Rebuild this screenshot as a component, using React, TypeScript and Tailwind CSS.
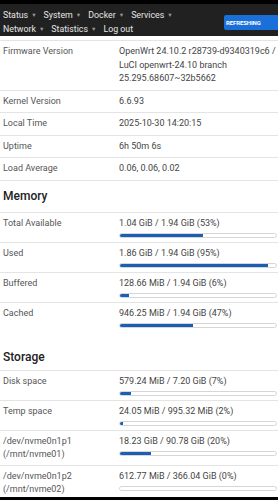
import React from "react";

type InfoRow = { label: string; value: string[] };
type BarRow = { label: string[]; text: string; pct: number };

const system: InfoRow[] = [
  {
    label: "Firmware Version",
    value: ["OpenWrt 24.10.2 r28739-d9340319c6 /", "LuCI openwrt-24.10 branch", "25.295.68607~32b5662"],
  },
  { label: "Kernel Version", value: ["6.6.93"] },
  { label: "Local Time", value: ["2025-10-30 14:20:15"] },
  { label: "Uptime", value: ["6h 50m 6s"] },
  { label: "Load Average", value: ["0.06, 0.06, 0.02"] },
];

const memory: BarRow[] = [
  { label: ["Total Available"], text: "1.04 GiB / 1.94 GiB (53%)", pct: 53 },
  { label: ["Used"], text: "1.86 GiB / 1.94 GiB (95%)", pct: 95 },
  { label: ["Buffered"], text: "128.66 MiB / 1.94 GiB (6%)", pct: 6 },
  { label: ["Cached"], text: "946.25 MiB / 1.94 GiB (47%)", pct: 47 },
];

const storage: BarRow[] = [
  { label: ["Disk space"], text: "579.24 MiB / 7.20 GiB (7%)", pct: 7 },
  { label: ["Temp space"], text: "24.05 MiB / 995.32 MiB (2%)", pct: 2 },
  { label: ["/dev/nvme0n1p1", "(/mnt/nvme01)"], text: "18.23 GiB / 90.78 GiB (20%)", pct: 20 },
  { label: ["/dev/nvme0n1p2", "(/mnt/nvme02)"], text: "612.77 MiB / 366.04 GiB (0%)", pct: 0 },
];

function MenuItem({ name, caret = true }: { name: string; caret?: boolean }) {
  return (
    <span className="flex items-center gap-[3px]">
      {name}
      {caret && <span className="text-[5.5px] text-[#9a9a9a]">▼</span>}
    </span>
  );
}

function Bar({ pct }: { pct: number }) {
  return (
    <div className="mt-[3px] h-[5px] w-full rounded-[3px] border border-[#d6d6d6] bg-white overflow-hidden">
      <div className="h-full bg-[#1a5fb4]" style={{ width: `${pct}%` }} />
    </div>
  );
}

function Section({
  title,
  rows,
  className,
  headClass,
}: {
  title: string;
  rows: BarRow[];
  className: string;
  headClass: string;
}) {
  return (
    <div className={className}>
      <div className={`pl-[3px] text-[12px] font-medium text-[#222] leading-[16px] ${headClass}`}>{title}</div>
      <div className="border-t border-[#e4e4e4] text-[9px] leading-[13px]">
        {rows.map((r, i) => (
          <div
            key={r.text}
            className={`flex py-[4px] ${i < rows.length - 1 ? "border-b border-[#e4e4e4]" : ""}`}
          >
            <div className="w-[119px] pl-[3px] text-[#555]">
              {r.label.map((l) => (
                <div key={l}>{l}</div>
              ))}
            </div>
            <div className="flex-1 text-[#444] pr-[1px]">
              <div>{r.text}</div>
              <Bar pct={r.pct} />
            </div>
          </div>
        ))}
      </div>
    </div>
  );
}

export default function App() {
  return (
    <div className="relative w-[278px] h-[500px] overflow-hidden bg-white flex flex-col font-['Roboto','Liberation_Sans',sans-serif]">
      {/* top bar */}
      <div className="shrink-0 bg-[#212121] border-t-[4px] border-black h-[36px] flex items-center pl-[3px] pt-[4px]">
        <div className="flex-1 flex flex-col text-[8.8px] leading-[14px] text-[#e6e6e6]">
          <div className="flex gap-[7px]">
            <MenuItem name="Status" />
            <MenuItem name="System" />
            <MenuItem name="Docker" />
            <MenuItem name="Services" />
          </div>
          <div className="flex gap-[7px]">
            <MenuItem name="Network" />
            <MenuItem name="Statistics" />
            <MenuItem name="Log out" caret={false} />
          </div>
        </div>
        <div className="w-[54px] h-[15px] rounded-l-[2px] bg-[#1b6fd8] flex items-center pl-[2px] text-[6px] font-bold text-white tracking-[-0.1px]">
          REFRESHING
        </div>
      </div>

      <div className="shrink-0 mt-[4px] border-t border-[#e4e4e4] text-[9px] leading-[13.5px]">
        {system.map((r) => (
          <div key={r.label} className="flex border-b border-[#e4e4e4] py-[4px]">
            <div className="w-[119px] pl-[3px] text-[#555]">{r.label}</div>
            <div className="flex-1 text-[#444]">
              {r.value.map((v) => (
                <div key={v}>{v}</div>
              ))}
            </div>
          </div>
        ))}
      </div>

      <Section title="Memory" rows={memory} className="shrink-0 mt-[7px]" headClass="pb-[8px]" />
      <Section title="Storage" rows={storage} className="shrink-0 mt-[17px]" headClass="pb-[5px]" />

      <div className="absolute bottom-0 left-0 right-0 h-[3px] bg-black" />
    </div>
  );
}
